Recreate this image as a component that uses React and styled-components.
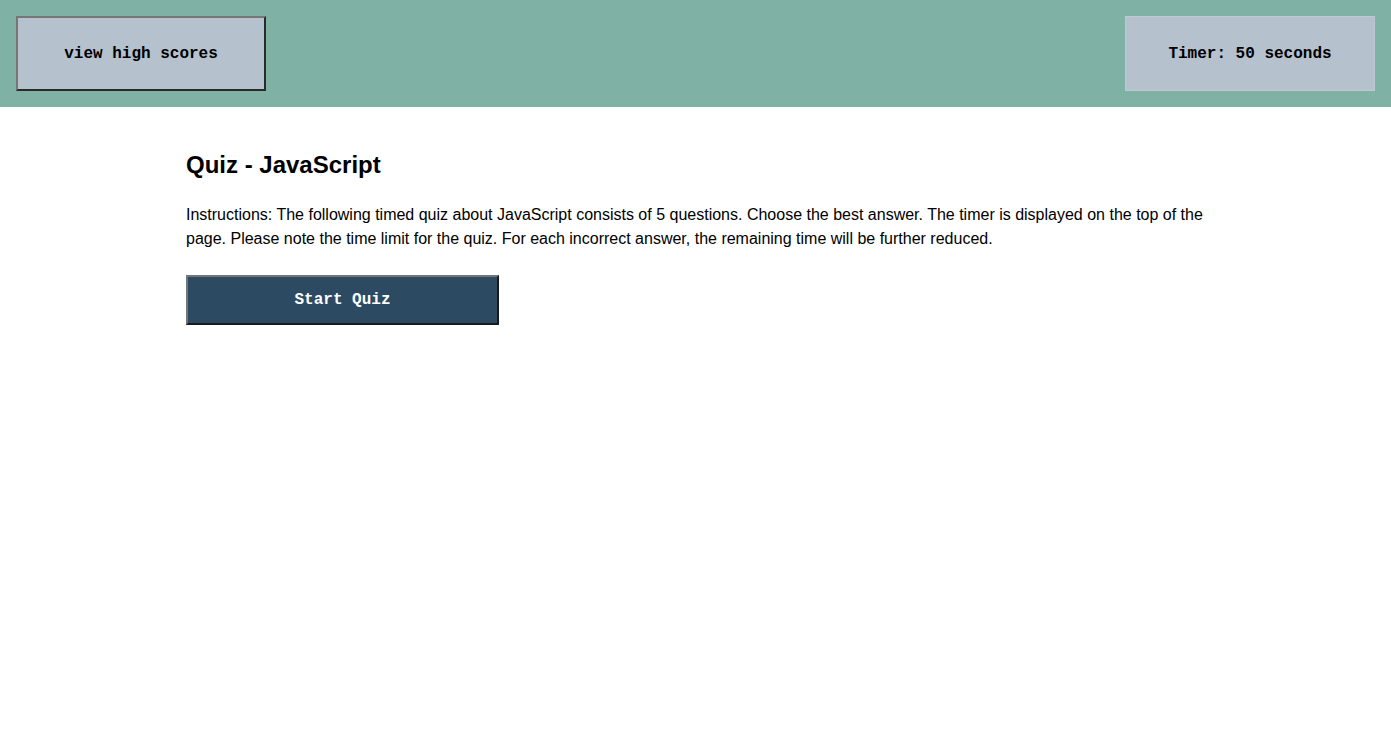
import React from 'react';
import styled, { createGlobalStyle } from 'styled-components';

const GlobalStyle = createGlobalStyle`
    body {
        margin : 0;
        background : white;
        font-family : "Liberation Sans", Arial, Helvetica, sans-serif;
        color : black;
    }
`;

//상단 바
const Header = styled.header`
    background : #7fb2a5;
    padding : 16px;
    display : flex;
    justify-content : space-between;
    align-items : center;
`;

const HeaderBox = styled.button`
    width : 250px;
    height : 75px;
    background : #b5c1cc;
    color : black;
    font-family : "Liberation Mono", "Courier New", monospace;
    font-weight : bold;
    font-size : 16px;
    display : flex;
    align-items : center;
    justify-content : center;
    box-sizing : border-box;
    border-style : solid;
    border-width : ${props => props.flat ? '1px' : '2px'};
    border-color : ${props => props.flat ? '#bfc9d2' : '#767676 #2a2a2a #2a2a2a #767676'};
    padding : 0;
`;

//본문
const Main = styled.main`
    width : 1019px;
    margin : 0 auto;
    padding-top : 44px;
`;

const Title = styled.h2`
    margin : 0;
    font-size : 24px;
    line-height : 28px;
    font-weight : bold;
`;

const Instructions = styled.p`
    margin : 24px 0 0;
    font-size : 16px;
    line-height : 24px;
`;

const StartButton = styled.button`
    margin-top : 24px;
    width : 313px;
    height : 50px;
    box-sizing : border-box;
    background : #2d4a63;
    color : white;
    font-family : "Liberation Mono", "Courier New", monospace;
    font-weight : bold;
    font-size : 16px;
    border : 2px solid;
    border-color : #767676 #1a1a1a #1a1a1a #767676;
    padding : 0;
`;

const App = () => {
    return (
        <>
            <GlobalStyle />
            <Header>
                <HeaderBox>view high scores</HeaderBox>
                <HeaderBox as="div" flat>Timer: 50 seconds</HeaderBox>
            </Header>
            <Main>
                <Title>Quiz - JavaScript</Title>
                <Instructions>
                    Instructions: The following timed quiz about JavaScript consists of 5 questions. Choose the best answer. The timer is displayed on the top of the page. Please note the time limit for the quiz. For each incorrect answer, the remaining time will be further reduced.
                </Instructions>
                <StartButton>Start Quiz</StartButton>
            </Main>
        </>
    )
};

export default App;
